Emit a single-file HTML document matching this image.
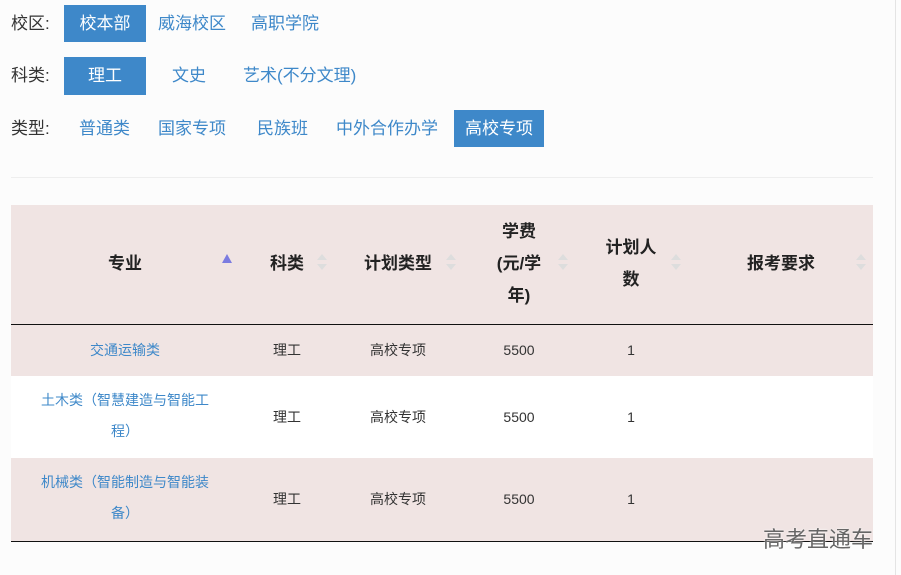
<!DOCTYPE html><html><head><meta charset="utf-8"><style>
body{margin:0;width:901px;height:575px;background:#fcfcfc;font-family:"Liberation Sans","Noto Sans CJK SC",sans-serif;position:relative;overflow:hidden}
.a{position:absolute;white-space:nowrap}
.l{font-size:17px;color:#333}
.o{font-size:17px;color:#3e88c9;line-height:37px;text-align:center}
.s{background:#3e88c9;color:#fff}
.h{font-size:17px;font-weight:bold;color:#222;text-align:center;line-height:32px}
.c{font-size:14px;color:#333;text-align:center;line-height:32px}
.b{font-size:14px;color:#3e88c9;text-align:center;line-height:32px}
.ar{position:absolute;width:0;height:0;border-left:5px solid transparent;border-right:5px solid transparent}
</style></head><body>
<div class="a l" style="left:11px;top:9px">校区:</div>
<div class="a o s" style="left:64px;top:5px;width:82px">校本部</div>
<div class="a o" style="left:158px;top:5px">威海校区</div>
<div class="a o" style="left:251px;top:5px">高职学院</div>
<div class="a l" style="left:11px;top:61px">科类:</div>
<div class="a o s" style="left:64px;top:57px;width:82px;height:38px">理工</div>
<div class="a o" style="left:172px;top:57px">文史</div>
<div class="a o" style="left:243px;top:57px">艺术(不分文理)</div>
<div class="a l" style="left:11px;top:114px">类型:</div>
<div class="a o" style="left:79px;top:110px">普通类</div>
<div class="a o" style="left:158px;top:110px">国家专项</div>
<div class="a o" style="left:257px;top:110px">民族班</div>
<div class="a o" style="left:336px;top:110px">中外合作办学</div>
<div class="a o s" style="left:454px;top:110px;width:90px">高校专项</div>
<div class="a" style="left:11px;top:177px;width:862px;height:1px;background:#eee"></div>
<div class="a" style="left:895px;top:0;width:1px;height:575px;background:#e4e4e4"></div>
<div class="a" style="left:11px;top:205px;width:862px;height:119px;background:#f0e4e3"></div>
<div class="a" style="left:11px;top:324px;width:862px;height:1px;background:#111"></div>
<div class="a" style="left:11px;top:325px;width:862px;height:51px;background:#f0e4e3"></div>
<div class="a" style="left:11px;top:376px;width:862px;height:82px;background:#fff"></div>
<div class="a" style="left:11px;top:458px;width:862px;height:83px;background:#f0e4e3"></div>
<div class="a" style="left:11px;top:541px;width:862px;height:1px;background:#111"></div>
<div class="a h" style="left:75px;top:248px;width:100px">专业</div>
<div class="a h" style="left:257px;top:248px;width:60px">科类</div>
<div class="a h" style="left:348px;top:248px;width:100px">计划类型</div>
<div class="a h" style="left:489px;top:216px;width:60px">学费<br>(元/学<br>年)</div>
<div class="a h" style="left:591px;top:232px;width:80px">计划人<br>数</div>
<div class="a h" style="left:731px;top:248px;width:100px">报考要求</div>
<div class="ar" style="left:222px;top:254px;border-bottom:9px solid #7b7be0"></div>
<div class="ar" style="left:317px;top:254px;border-bottom:6px solid #ddd"></div><div class="ar" style="left:317px;top:264px;border-top:6px solid #ddd"></div>
<div class="ar" style="left:446px;top:254px;border-bottom:6px solid #ddd"></div><div class="ar" style="left:446px;top:264px;border-top:6px solid #ddd"></div>
<div class="ar" style="left:558px;top:254px;border-bottom:6px solid #ddd"></div><div class="ar" style="left:558px;top:264px;border-top:6px solid #ddd"></div>
<div class="ar" style="left:671px;top:254px;border-bottom:6px solid #ddd"></div><div class="ar" style="left:671px;top:264px;border-top:6px solid #ddd"></div>
<div class="ar" style="left:856px;top:254px;border-bottom:6px solid #ddd"></div><div class="ar" style="left:856px;top:264px;border-top:6px solid #ddd"></div>
<div class="a b" style="left:25px;top:334px;width:200px">交通运输类</div>
<div class="a b" style="left:25px;top:385px;width:200px;line-height:31px">土木类（智慧建造与智能工<br>程）</div>
<div class="a b" style="left:25px;top:467px;width:200px;line-height:31px">机械类（智能制造与智能装<br>备）</div>
<div class="a c" style="left:257px;top:334px;width:60px">理工</div>
<div class="a c" style="left:348px;top:334px;width:100px">高校专项</div>
<div class="a c" style="left:489px;top:334px;width:60px">5500</div>
<div class="a c" style="left:601px;top:334px;width:60px">1</div>
<div class="a c" style="left:257px;top:401px;width:60px">理工</div>
<div class="a c" style="left:348px;top:401px;width:100px">高校专项</div>
<div class="a c" style="left:489px;top:401px;width:60px">5500</div>
<div class="a c" style="left:601px;top:401px;width:60px">1</div>
<div class="a c" style="left:257px;top:483px;width:60px">理工</div>
<div class="a c" style="left:348px;top:483px;width:100px">高校专项</div>
<div class="a c" style="left:489px;top:483px;width:60px">5500</div>
<div class="a c" style="left:601px;top:483px;width:60px">1</div>
<div class="a" style="left:763px;top:522px;font-size:22px;color:#666;text-shadow:0 0 2px #fff">高考直通车</div>
</body></html>
